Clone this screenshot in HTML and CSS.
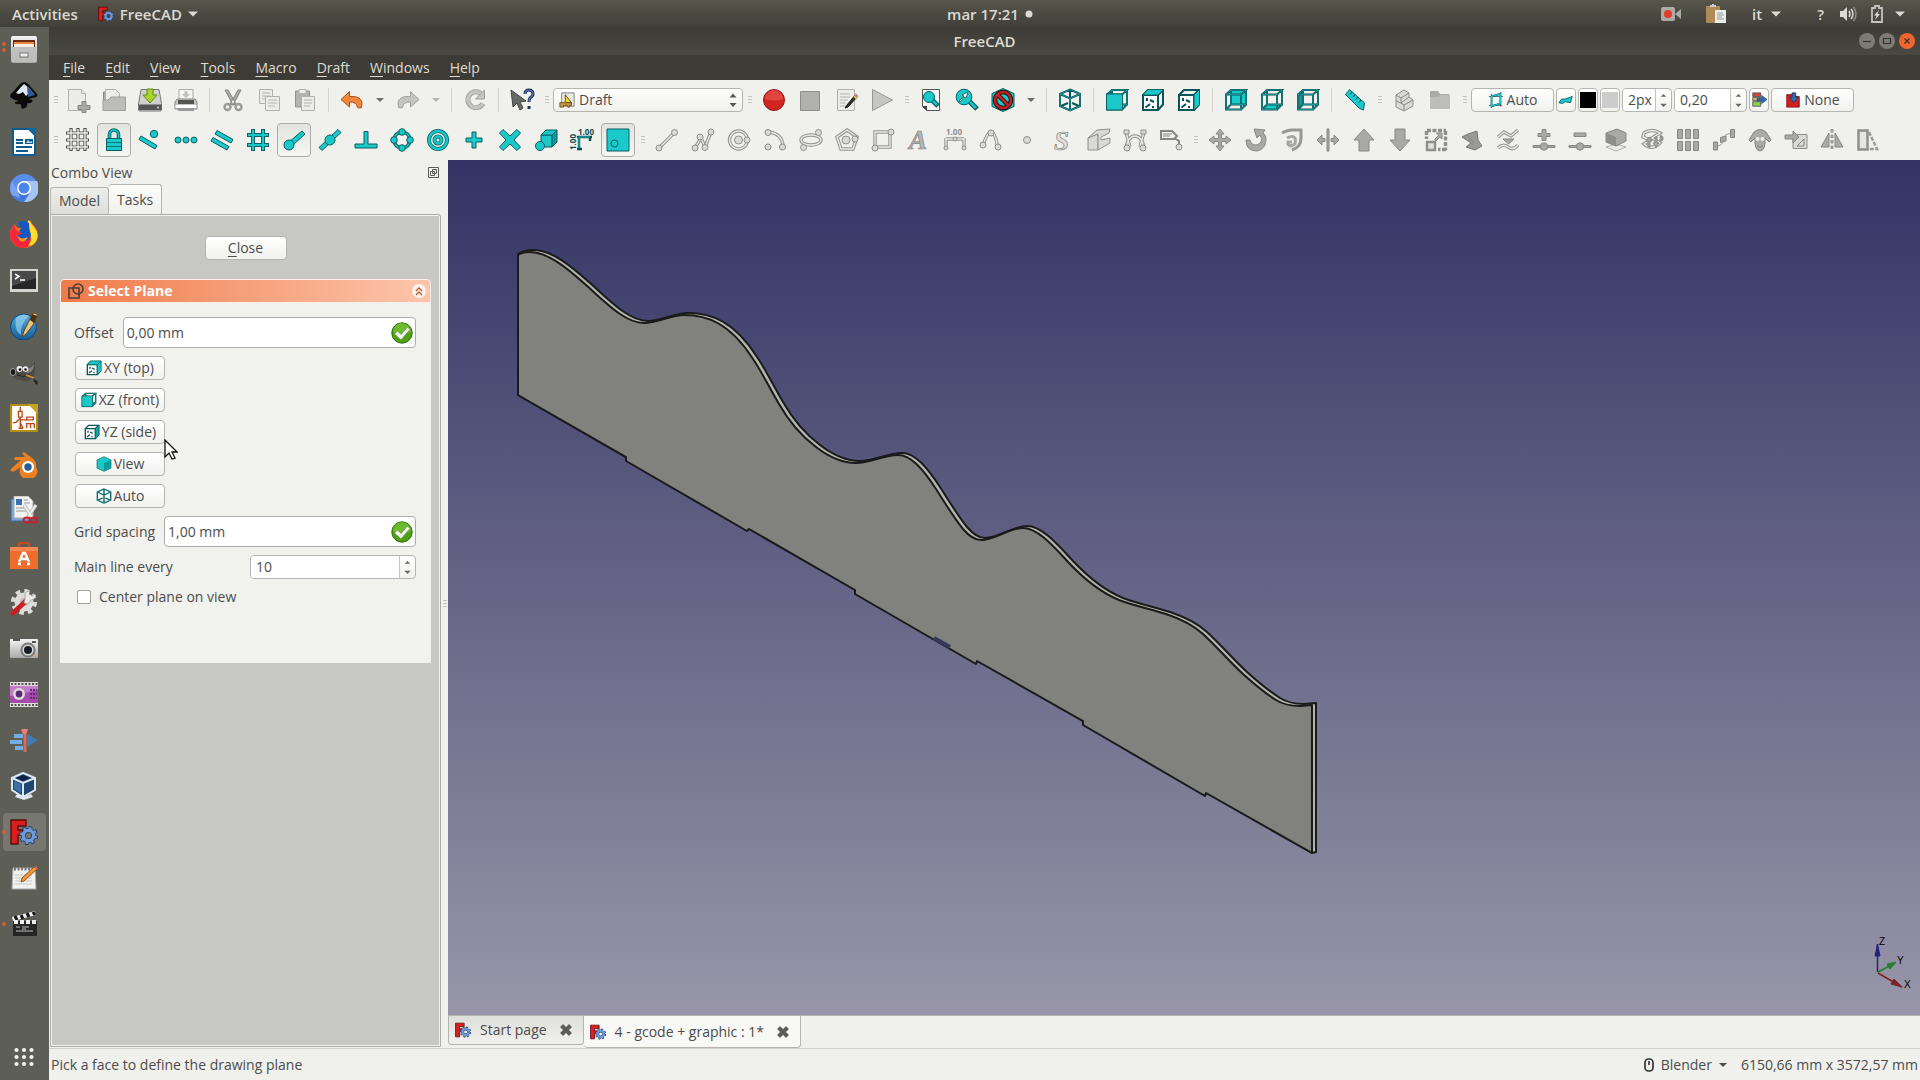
FILE: index.html
```html
<!DOCTYPE html>
<html lang="en">
<head>
  <meta charset="UTF-8">
  <meta name="viewport" content="width=device-width, initial-scale=1">
  <title>FreeCAD</title>
  <link rel="stylesheet" href="styles.css">
</head>
<body>
  <!-- Shared symbols -->
  <svg class="sprite" aria-hidden="true">
    <defs>
      <linearGradient id="steel" x1="0" y1="0" x2="0" y2="1">
        <stop offset="0" stop-color="#f4f4f4"/><stop offset="1" stop-color="#a9a9a9"/>
      </linearGradient>
      <linearGradient id="blueBall" x1="0" y1="0" x2="0" y2="1">
        <stop offset="0" stop-color="#4fb0e0"/><stop offset="1" stop-color="#155c9c"/>
      </linearGradient>
    </defs>
    <symbol id="freecad" viewBox="0 0 28 26">
      <path d="M1 1h15v6H8v4h5v5H8v9H1z" fill="#d8201f" stroke="#5c0a0a" stroke-width="1.4"/>
      <circle cx="18.5" cy="16.5" r="7.8" fill="none" stroke="#1f3a66" stroke-width="3.6" stroke-dasharray="3.3 2.83"/>
      <circle cx="18.5" cy="16.5" r="5.2" fill="none" stroke="#1f3a66" stroke-width="5"/>
      <circle cx="18.5" cy="16.5" r="7.4" fill="none" stroke="#6c9bd8" stroke-width="2.4" stroke-dasharray="2.4 3.41" stroke-dashoffset="-.4"/>
      <circle cx="18.5" cy="16.5" r="5.2" fill="none" stroke="#6c9bd8" stroke-width="3.4"/>
    </symbol>
    <symbol id="wire" viewBox="0 0 24 24">
      <path class="dark" d="M2 6.500h15v15H2zM2 6.500 7 2h15l-5 4.500M22 2v14.500l-5 5M7 2v14.500h15M7 16.500l-5 5"/>
      <path class="core" d="M2 6.500h15v15H2zM2 6.500 7 2h15l-5 4.500M22 2v14.500l-5 5M7 2v14.500h15M7 16.500l-5 5"/>
    </symbol>
    <symbol id="iso" viewBox="0 0 24 24">
      <path class="dark" d="M12 1.500 22 6v12l-10 4.500L2 18V6zM2 6l10 4.500L22 6M12 10.500v12M12 2v8M3 18l7-3M21 18l-7-3"/>
      <path class="core" d="M12 1.500 22 6v12l-10 4.500L2 18V6zM2 6l10 4.500L22 6M12 10.500v12"/>
    </symbol>
    <symbol id="box" viewBox="0 0 24 24">
      <path d="M2 7h15v15H2z" fill="#fff"/>
      <path class="dark" d="M2 7h15v15H2zM2 7l5-5h15v14.500l-5 5.500M17 7l5-5"/>
      <path class="dark" d="M6 10v3M4.500 19.500 9 16M9 12l4 2M12 18v2"/>
    </symbol>
    <symbol id="check" viewBox="0 0 22 22">
      <circle cx="11" cy="11" r="10.2" fill="#4ba30f" stroke="#2f6c0a"/>
      <path d="M2 10a9 9 0 0 1 18 0q-9 4-18 0z" fill="#79c637" opacity=".7"/>
      <path d="m3.500 12 3-3 3.500 3.500L16.500 5l2.500 2.500L10 18z" fill="#f4f4f0" stroke="#6d8a5d" stroke-width=".7"/>
    </symbol>
    <symbol id="cross" viewBox="0 0 12 12">
      <path d="M3 .500 6 3.500l3-3L11.500 3l-3 3 3 3L9 11.500l-3-3-3 3L.500 9l3-3-3-3z" fill="#5b5c57" stroke="#44453f" stroke-width=".6"/>
    </symbol>
    <symbol id="spin" viewBox="0 0 16 24">
      <path d="M5 8.500 8 5.500l3 3zM4.500 16h7L8 19.500z" fill="#666"/>
    </symbol>
    <symbol id="down" viewBox="0 0 10 6"><path d="M0 .500h10L5 5.500z"/></symbol>
  </svg>

  <!-- System bar -->
  <header class="topbar">
    <div class="topbar-left">
      <button class="top-item">Activities</button>
      <button class="top-item app-name"><svg width="16" height="16"><use href="#freecad"/></svg>FreeCAD<svg class="caret" width="10" height="6"><use href="#down"/></svg></button>
    </div>
    <button class="top-item clock">mar 17:21 <svg width="8" height="8" viewBox="0 0 8 8"><circle cx="4" cy="4" r="3.5" fill="#dcdad4"/></svg></button>
    <div class="topbar-right">
      <svg class="tray-rec" width="20" height="16" viewBox="0 0 20 16"><rect y="1" width="14" height="14" rx="2" fill="#aaa9a4"/><path d="m14 8 6-5v10z" fill="#aaa9a4"/><circle cx="7" cy="8" r="4" fill="#e23c28"/></svg>
      <svg class="tray-clip" width="20" height="20" viewBox="0 0 20 20"><rect y="2" width="14" height="17" rx="1" fill="#b08a58"/><path d="M4 3h6V1H8V0H6v1H4z" fill="#ccc"/><path d="M9 6h11v13H9z" fill="#ececea"/><path d="M11 9h6M11 11h7M11 13h5M11 15h7" stroke="#999"/></svg>
      <button class="top-item lang">it<svg class="caret" width="10" height="6"><use href="#down"/></svg></button>
      <span class="tray-help">?</span>
      <svg width="17" height="16" viewBox="0 0 17 16"><path d="M0 5h3l4-4v14l-4-4H0z" fill="#dcdad4"/><path d="M9 5q2 3 0 6M11 3q4 5 0 10" fill="none" stroke="#dcdad4" stroke-width="1.5"/><path d="M13.500 1q5 7 0 14" fill="none" stroke="#8d8b84" stroke-width="1.5"/></svg>
      <svg class="tray-battery" width="12" height="18" viewBox="0 0 12 18"><path d="M1 3h3V1h4v2h3v14H1z" fill="none" stroke="#c5c3bc" stroke-width="1.8"/><path d="M8 5 3 10.500h2.500L4 15l5-6H6.500z" fill="#dcdad4"/></svg>
      <svg class="caret" width="10" height="6"><use href="#down"/></svg>
    </div>
  </header>

  <div class="desktop">
    <!-- Launcher -->
    <nav class="dock" aria-label="Launcher">
      <button class="dock-item running two" aria-label="Files"><svg viewBox="0 0 28 28"><rect x="1" y="0" width="26" height="27" rx="2" fill="url(#steel)"/><path d="M3 4h22v7H3z" fill="#6b2b12"/><path d="M4 6h20v5H4z" fill="#ee8240"/><path d="M4 8h20v3H4z" fill="#f6eee4"/><path d="M2 11h24v15H2z" fill="#bebebc"/><rect x="10" y="17" width="8" height="4" fill="#eee" stroke="#777"/></svg></button>
      <button class="dock-item" aria-label="Inkscape"><svg viewBox="0 0 28 28"><path d="M14 0q3 0 6 4l7 8q2 3-5 4l-3 1q5 1 3 3t-5 1q1 3-2 5t-4-1q1-2-1-3-6 1-5-2l4-1Q0 17 0 14q0-2 3-4l6-7q3-3 5-3z" fill="#0b0b0c"/><path d="m14 2 5 4 5 6-5-1-3 3-3-4-4 2-3-1 5-6z" fill="#dfe8f2"/><path d="m17 4 8 9-7 2z" fill="#2e5b98"/></svg></button>
      <button class="dock-item" aria-label="Writer"><svg viewBox="0 0 28 28"><path d="M3 1h16l6 6v20H3z" fill="#fff" stroke="#0f5c91" stroke-width="2"/><path d="M18 0h8v8z" fill="#0b6aa8"/><path d="M6 12h7M6 15h7M6 19h16M6 23h12" stroke="#0f5c91" stroke-width="2"/><path d="M15 11h8v5h-8z" fill="#0f5c91"/><path d="m16 15 2-3 2 2 2-1v2z" fill="#b7d8ec"/></svg></button>
      <button class="dock-item" aria-label="Chromium"><svg viewBox="0 0 28 28"><circle cx="14" cy="14" r="14" fill="#5b8def"/><path d="M14 7H27A14 14 0 0 1 14 28l6-11z" fill="#a4c4f8"/><path d="M8 17 2 7a14 14 0 0 0 12 21l5-8z" fill="#4674d9"/><path d="M8 17 2 7a14 14 0 0 0 0 14l8 3z" fill="#7aa4f2"/><circle cx="14" cy="14" r="7" fill="#fff"/><circle cx="14" cy="14" r="5.5" fill="#4a86ea"/></svg></button>
      <button class="dock-item" aria-label="Firefox"><svg viewBox="0 0 28 28"><path d="M20 0q2 4 5 7 3 4 3 8a14 13 0 0 1-28 0Q0 8 5 4q0 3 4 4 5 0 8 3z" fill="#ff6b1e"/><path d="M0 14q1-7 5-9-1 6 5 7l5 8 8-2q-1 9-10 10A14 14 0 0 1 0 14z" fill="#f5263c"/><path d="M19 0q2 4 5 7 5 6 3 12t-9 7q6-8 1-15t0-11z" fill="#ffdf2b"/><path d="M8 3q5-4 11 0 0 7 2 11 0 7-7 7t-6-6l4-1q-5-4 0-6-3 0-4-5z" fill="#1558c4"/><path d="M6 14q5 7 12 3-3 6-8 4z" fill="#ff9a1c"/></svg></button>
      <button class="dock-item" aria-label="Terminal"><svg viewBox="0 0 28 28"><path d="M0 3h28v23H0z" fill="#d5d5d1"/><path d="M2 5h24v18H2z" fill="#262626"/><path d="M2 5h24v7L2 20z" fill="#484848"/><path d="m5 8 4 2.500L5 13M10 14h5" stroke="#fff" stroke-width="1.5" fill="none"/></svg></button>
      <button class="dock-item" aria-label="Scribus"><svg viewBox="0 0 28 28"><circle cx="13.5" cy="15" r="13" fill="url(#blueBall)" stroke="#0e4472"/><path d="M6 6q8-6 13-2-9 8-8 19-7-4-5-17z" fill="#9fd4ee" opacity=".65"/><path d="M23 1q5 0 4 3l-4 9-7 9-4 3 2-6z" fill="#e8c47c" stroke="#6b4616"/><path d="m22 2 5 2-3 7-4-3z" fill="#4a3013"/></svg></button>
      <button class="dock-item" aria-label="GIMP"><svg viewBox="0 0 28 28"><path d="M25 3q1 12-2 17-6 5-13 2-5 0-8-5-2-4 2-7l7 2q10-1 14-9z" fill="#4d4b45"/><path d="M24 6q0 7-6 9l-5-3q8-1 11-6z" fill="#85827a"/><ellipse cx="3" cy="14" rx="2.800" ry="3.500" fill="#191919" stroke="#bbb" stroke-width=".8"/><circle cx="9.5" cy="11" r="3" fill="#eee"/><circle cx="15.5" cy="11" r="2.800" fill="#eee"/><circle cx="10" cy="11.500" r="1.3"/><circle cx="15.5" cy="11.500" r="1.2"/><path d="M7 17q6 3 12 0" fill="none" stroke="#222"/><path d="m16 17 8 3" stroke="#dc8a3a" stroke-width="1.8"/><path d="m23 20 5 4-1 3q-3-2-4-7z" fill="#222"/></svg></button>
      <button class="dock-item" aria-label="Schematics"><svg viewBox="0 0 30 30"><path d="M1 1h28v28H1z" fill="#fffdf6" stroke="#b48d18" stroke-width="2.4"/><path d="M19 0h11v11z" fill="#c8a41e"/><path d="M11 3v5M9 8h4v6H9zM11 14v3h7M18 14h7v3h-7zM6 20l5-5v11M3 20h3M11 20l3 6M9 26h5M17 21h9M18 21v5M22 21v5M26 21v5" fill="none" stroke="#b3471f" stroke-width="1.4"/></svg></button>
      <button class="dock-item" aria-label="Blender"><svg viewBox="0 0 28 28"><path d="M2 18q-2 2-1 3l2 1 8-5a9 8 0 1 0 15 0q1-5-4-9l-8-6-2 1 3 4H5l-1 3h7z" fill="#ef8021"/><circle cx="18" cy="17" r="6" fill="#fff"/><circle cx="18" cy="17" r="3.7" fill="#285b94"/></svg></button>
      <button class="dock-item" aria-label="Document scanner"><svg viewBox="0 0 28 28"><path d="M1 3h18v22H1z" fill="#7ba6d6" stroke="#3b6aa8"/><path d="M4 0h14l5 5v17H4z" fill="#f1f2f1" stroke="#aaa"/><path d="M6 3h6v6H6z" fill="#3a71b5"/><path d="M14 4h4M14 7h6M6 12h12M6 15h10" stroke="#999"/><path d="m14 9 8 12M26 9l-8 12" stroke="#b4b4b2" stroke-width="3.6"/><path d="m14 9 8 12M26 9l-8 12" stroke="#ecece9" stroke-width="2.2"/><ellipse cx="17" cy="24" rx="3.5" ry="2.6" fill="none" stroke="#cc2028" stroke-width="2"/><ellipse cx="24" cy="24" rx="3.5" ry="2.6" fill="none" stroke="#cc2028" stroke-width="2"/></svg></button>
      <button class="dock-item" aria-label="Software"><svg viewBox="0 0 28 28"><path d="M9 6V2q5-3 10 0v4" fill="none" stroke="#cc4a1c" stroke-width="2.4"/><path d="M0 5h28v22H0z" fill="#ee6c2c"/><path d="M0 5h28v4H0z" fill="#f58a50"/><path d="m9 20 4-9h2l4 9M8 22h3M17 22h3M10 17h8" fill="none" stroke="#fff" stroke-width="2.4"/></svg></button>
      <button class="dock-item" aria-label="Settings"><svg viewBox="0 0 28 28"><circle cx="14" cy="14" r="11" fill="none" stroke="#dcdcda" stroke-width="4" stroke-dasharray="4.5 4.14"/><circle cx="14" cy="14" r="9.5" fill="#dcdcda"/><circle cx="14" cy="14" r="4" fill="#b9b9b6"/><path d="m3 25 13-12" stroke="#c71f24" stroke-width="5" stroke-linecap="round"/><path d="m15 11-1 4 4 1 3-4q4 0 5-4l-1-2-3 2-3-2 1-3q-5 0-5 4z" fill="#e9e9e7" stroke="#999" stroke-width=".8"/></svg></button>
      <button class="dock-item" aria-label="Camera"><svg viewBox="0 0 28 28"><rect y="5" width="28" height="19" rx="1" fill="url(#steel)"/><path d="M3 4h7v3H3zM22 7h4v2h-4z" fill="#555"/><circle cx="18" cy="16" r="7.6" fill="#7b7b79"/><circle cx="18" cy="16" r="5.5" fill="#dcdcda"/><circle cx="18" cy="16" r="4" fill="#171c26"/><path d="m24 21 3 1-2 1z" fill="#ee9a3b"/></svg></button>
      <button class="dock-item" aria-label="Cheese"><svg viewBox="0 0 28 28"><path d="M0 2h28v25H0z" fill="#dededc"/><path d="M1 4h27M1 25h27" stroke="#555" stroke-width="2" stroke-dasharray="2 1.5"/><path d="M0 6h28v17H0z" fill="#a64bad"/><path d="M0 6h28v4L0 16z" fill="#c57acb"/><circle cx="9" cy="14" r="6" fill="#dcdcda"/><circle cx="9" cy="14" r="3.4" fill="#5b2a77"/><path d="M20 10h7M20 14h7M20 18h7" stroke="#642a72" stroke-width="2" stroke-dasharray="2 1"/></svg></button>
      <button class="dock-item" aria-label="Video editor"><svg viewBox="0 0 28 28"><path d="M4 8h9v4H4zM0 14h12v4H0zM5 20h8v4H5z" fill="#72aee6"/><path d="M17 8v13l11-7z" fill="#4379b5"/><path d="M15 5v21" stroke="#da6a5c" stroke-width="3"/><path d="M11 3h7l-2 5h-3z" fill="#ed8374"/></svg></button>
      <button class="dock-item" aria-label="VirtualBox"><svg viewBox="0 0 28 28"><path d="m7 22 7 3 7-3 2 3-9 3-9-3z" fill="#dbe6f1"/><path d="M13 1 25 6v12l-12 7L2 18V6z" fill="#20466f" stroke="#dce9f4" stroke-width="2"/><path d="m2 6 11 5 12-5M13 11v14" fill="none" stroke="#dce9f4" stroke-width="2"/><path d="m6 6 7-3 7 3-7 3z" fill="#0c2445"/><path d="m4 9 7 3v9l-7-4z" fill="#3e70a4"/></svg></button>
      <button class="dock-item running active" aria-label="FreeCAD"><svg><use href="#freecad"/></svg></button>
      <button class="dock-item" aria-label="Notes"><svg viewBox="0 0 28 28"><path d="M3 4h22l1 21H2z" fill="#f1f1ed" stroke="#aaa"/><path d="M4 5h20" stroke="#777" stroke-width="3" stroke-dasharray="2 1.5"/><path d="M5 11h17M5 14h17M5 17h17M5 20h17" stroke="#c6c6c2"/><path d="m27 5-13 12-3 1 1-4L24 3z" fill="#f19838" stroke="#96561b"/><path d="m24 3 3 3 1-1-2-3z" fill="#d65"/></svg></button>
      <button class="dock-item running" aria-label="Video player"><svg viewBox="0 0 28 28"><path d="m2 7 23-6 1 4-23 6z" fill="#eee"/><path d="m5 6 2 4M11 5l2 4M17 3l2 4M23 2l2 3" stroke="#171717" stroke-width="3"/><path d="M3 11h24v15H3z" fill="#262626"/><path d="M4 12h22" stroke="#eee" stroke-width="4" stroke-dasharray="4 2"/><path d="M6 17h4M12 17h7M6 21h17M12 19h4" stroke="#bbb"/></svg></button>
      <button class="dock-item apps" aria-label="Show applications"><svg viewBox="0 0 28 28"><path d="M6.500 7h.010M14 7h.010M21.500 7h.010M6.500 14h.010M14 14h.010M21.500 14h.010M6.500 21h.010M14 21h.010M21.500 21h.010" stroke="#f2f1ee" stroke-width="4.2" stroke-linecap="round"/></svg></button>
    </nav>

    <main class="window">
      <div class="titlebar">
        <h1>FreeCAD</h1>
        <div class="window-buttons">
          <button aria-label="Minimize"><svg viewBox="0 0 16 16"><path d="M4 8.500h8"/></svg></button>
          <button aria-label="Restore"><svg viewBox="0 0 16 16"><path d="M4.500 5.500h7v5h-7z"/></svg></button>
          <button class="close" aria-label="Close window"><svg viewBox="0 0 16 16"><path d="m5.500 5.500 5 5m0-5-5 5"/></svg></button>
        </div>
      </div>
      <div class="menubar">
        <button><u>F</u>ile</button>
        <button><u>E</u>dit</button>
        <button><u>V</u>iew</button>
        <button><u>T</u>ools</button>
        <button><u>M</u>acro</button>
        <button><u>D</u>raft</button>
        <button><u>W</u>indows</button>
        <button><u>H</u>elp</button>
      </div>

      <!-- Toolbar: file, view, macro, properties -->
      <div class="toolbar">
        <span class="grip"></span>
        <button class="tool" aria-label="New"><svg viewBox="0 0 24 24"><path class="paper" d="M2.500 1.500h13l4 4v17h-17z"/><path class="paper" d="M15.500 1.500v4h4"/><path class="g" d="M16 13.500h4v4h4v4h-4v3h-4v-3h-4v-4h4z"/></svg></button>
        <button class="tool" aria-label="Open"><svg viewBox="0 0 24 24"><path class="g" d="M1.500 4h7v18h-7z"/><path class="paper" d="M3.500 1.500h10l4 4V15h-14z"/><path d="M1 22.500V12h5l3-3h14.500v13.500z" fill="#bcbcba" stroke="#9e9e9c"/></svg></button>
        <button class="tool" aria-label="Save"><svg viewBox="0 0 24 24"><path d="M3 1.500h18l2.500 14V22q0 1-1 1h-21q-1 0-1-1v-6z" fill="#cfcfcd" stroke="#777"/><path d="M1 16.500h22.500V22H1z" fill="#555"/><circle cx="20" cy="19.5" r="1" fill="#ddd"/><path d="M9 1h6v6h4l-7 8-7-8h4z" fill="#a6d52c" stroke="#5b8c0c"/></svg></button>
        <button class="tool" aria-label="Print"><svg viewBox="0 0 24 24"><path d="M5 1.500h14V12H5z" fill="#f5f5f3" stroke="#aaa"/><path d="M10.500 3h3v3h3L12 10 7.500 6h3z" fill="#c2c2c0"/><path d="M3 11h18l2 3v7H1v-7z" fill="#c4c4c2" stroke="#888"/><path d="M4 12h16v4H4z" fill="#555"/><path d="M1.500 17h21v3h-21z" fill="#fff"/><path d="M4 20h16v3H4z" fill="#999"/></svg></button>
        <span class="sep"></span>
        <button class="tool" aria-label="Cut"><svg viewBox="0 0 24 24"><path class="g" d="m4 2 3 0 8 14-3 1zM20 2l-3 0-8 14 3 1z"/><ellipse cx="6.500" cy="19" rx="3" ry="3" fill="none" stroke="#9c9c9a" stroke-width="2.4"/><ellipse cx="17.5" cy="19" rx="3" ry="3" fill="none" stroke="#9c9c9a" stroke-width="2.4"/></svg></button>
        <button class="tool" aria-label="Copy"><svg viewBox="0 0 24 24"><path class="paper" d="M2.500 1.500h13v14h-13z"/><path class="lines" d="M5 5h8M5 8h8M5 11h8"/><path class="paper" d="M8.500 8.500h14v14h-14z"/><path class="lines" d="M11 12h9M11 15h9M11 18h7"/></svg></button>
        <button class="tool" aria-label="Paste"><svg viewBox="0 0 24 24"><path d="M2.500 3h14v16h-14z" fill="#b3b3b0" stroke="#929290"/><path class="paper" d="M6 1.500h7v4H6z"/><path class="paper" d="M8.500 8.500h13v14h-13z"/><path class="lines" d="M11 12h8M11 15h8M11 18h6"/></svg></button>
        <span class="sep"></span>
        <button class="tool" aria-label="Undo"><svg viewBox="0 0 24 24"><path d="M9.500 3.500v5q11-1 12.500 6l-.500 5q-2 1-4 0-1-6-8-5.500v5L1 11.500z" fill="#f0883b" stroke="#b14f12"/></svg></button>
        <button class="drop" aria-label="Undo history"><svg width="8" height="6"><use href="#down"/></svg></button>
        <button class="tool" aria-label="Redo"><svg viewBox="0 0 24 24"><path d="M14.500 3.500v5q-11-1-12.500 6l.500 5q2 1 4 0 1-6 8-5.500v5l8.500-7.500z" fill="#c4c4c2" stroke="#a0a09e"/></svg></button>
        <button class="drop off" aria-label="Redo history"><svg width="8" height="6"><use href="#down"/></svg></button>
        <span class="sep"></span>
        <button class="tool" aria-label="Refresh"><svg viewBox="0 0 24 24"><path d="M18 5.500a8 8 0 1 0 2 10" fill="none" stroke="#a0a09e" stroke-width="5"/><path d="M18 5.500a8 8 0 1 0 2 10" fill="none" stroke="#c4c4c2" stroke-width="3.4"/><path d="M21.500 2v9h-9z" fill="#c4c4c2" stroke="#a0a09e"/></svg></button>
        <span class="sep"></span>
        <button class="tool" aria-label="What's this?"><svg viewBox="0 0 24 24"><path d="m1 2 2 17 4-4 3 7 3-2-3-6 6-1z" fill="#666a68" stroke="#444"/><path d="M15 6q0-4 4-4t4 4q0 2-3 4-1 1-1 4M19 18v3" fill="none" stroke="#1e2d50" stroke-width="3"/><path d="M15 6q0-4 4-4t4 4q0 2-3 4-1 1-1 4" fill="none" stroke="#5b7cb4" stroke-width="1.2"/></svg></button>
        <span class="grip"></span>
        <div class="combo">
          <svg viewBox="0 0 18 18"><path d="M3 1h14v15H3z" fill="#e8e8e6" stroke="#777"/><path d="m7 3 7 9H7z" fill="#f5d51b" stroke="#55480d"/><path d="M1 12h13v3h-2v2h-2v-2H5v2H1z" fill="#c99a4d" stroke="#6c4813"/></svg>
          <select aria-label="Workbench"><option>Draft</option></select>
          <svg viewBox="0 0 16 18"><path d="m4.500 6.500 3.500-4 3.500 4zM4.500 12h7L8 16z" fill="#555"/></svg>
        </div>
        <span class="grip"></span>
        <button class="tool" aria-label="Record macro"><svg viewBox="0 0 24 24"><circle cx="12" cy="12" r="10.5" fill="#d32424" stroke="#971313"/><path d="M3 11a9 9 0 0 1 18 0q-9 3-18 0z" fill="#e2443f"/></svg></button>
        <button class="tool" aria-label="Stop macro"><svg viewBox="0 0 24 24"><path d="M2.500 3.500h19v19h-19z" fill="#b0b0ae" stroke="#8d8d8b"/></svg></button>
        <button class="tool" aria-label="Macros"><svg viewBox="0 0 24 24"><path class="paper" d="M3.500 1.500h17v21h-17z"/><path class="lines" d="M6 6h10M6 9h10M6 12h8M6 15h6M6 18h6"/><path d="m22 6-9 11-2 3 3-1 10-11z" fill="#333" stroke="#111"/><path d="m20 8 3 3" stroke="#e0c04b" stroke-width="2"/><path d="m21 6 3 3" stroke="#d68bb7" stroke-width="2"/></svg></button>
        <button class="tool" aria-label="Run macro"><svg viewBox="0 0 24 24"><path d="m2.500 1.500 20 10.500-20 10.500z" fill="#c6c6c4" stroke="#989896"/></svg></button>
        <span class="grip"></span>
        <button class="tool" aria-label="Fit all"><svg viewBox="0 0 24 24"><path d="M3.500 1.500h17v21H8l-4.500-4z" fill="#f6f6f6" stroke="#555"/><path d="m13 12 6 6" stroke="#095a5c" stroke-width="5"/><path d="m13 12 5 5" stroke="#17c6c6" stroke-width="2.5"/><circle class="t" cx="10" cy="9" r="5.5"/><path d="M3 18h5v5z" fill="#444"/></svg></button>
        <button class="tool" aria-label="Fit selection"><svg viewBox="0 0 24 24"><path d="m14 13 8 8" stroke="#095a5c" stroke-width="5"/><path d="m14 13 7 7" stroke="#17c6c6" stroke-width="2.5"/><circle class="t" cx="9" cy="9" r="7.8"/><path d="m4 13 5-5-2-1 6-3-2 6-2-1-4 5z" fill="#fff" stroke="#333" stroke-width=".7"/></svg></button>
        <button class="tool" aria-label="Draw style"><svg viewBox="0 0 24 24"><path class="t" d="m12 .500 11 5v13l-11 5-11-5v-13z"/><circle cx="12" cy="12" r="8" fill="none" stroke="#2b0808" stroke-width="4.5"/><path d="m6.500 6.500 11 11" stroke="#2b0808" stroke-width="4.5"/><circle cx="12" cy="12" r="8" fill="none" stroke="#be2323" stroke-width="2.5"/><path d="m6.500 6.500 11 11" stroke="#be2323" stroke-width="2.5"/></svg></button>
        <button class="drop" aria-label="Draw style list"><svg width="8" height="6"><use href="#down"/></svg></button>
        <span class="sep"></span>
        <button class="tool" aria-label="Axonometric"><svg><use href="#iso"/></svg></button>
        <span class="sep"></span>
        <button class="tool" aria-label="Front"><svg viewBox="0 0 24 24"><use href="#wire"/><path class="t" d="M1.500 6h16v16h-16z"/></svg></button>
        <button class="tool" aria-label="Top"><svg viewBox="0 0 24 24"><use href="#box"/><path class="t" d="M1.500 7 7 1.500h15.500L17 7z"/></svg></button>
        <button class="tool" aria-label="Right"><svg viewBox="0 0 24 24"><use href="#box"/><path class="t" d="m17 7 5.500-5.500v15L17 22z"/></svg></button>
        <span class="sep"></span>
        <button class="tool" aria-label="Rear"><svg viewBox="0 0 24 24"><path class="t" d="M7 2h15v14.500H7z"/><use href="#wire"/></svg></button>
        <button class="tool" aria-label="Bottom"><svg viewBox="0 0 24 24"><path class="t" d="M7 16.500h15l-5 5H2z"/><use href="#wire"/></svg></button>
        <button class="tool" aria-label="Left"><svg viewBox="0 0 24 24"><path d="m2 6.500 5-4.500v14.500l-5 5z" fill="#0d9698"/><use href="#wire"/></svg></button>
        <span class="sep"></span>
        <button class="tool" aria-label="Measure"><svg viewBox="0 0 24 24"><path class="t" d="m6.500 1.500 15 13.500-1 7-4-1.500L2.500 6.500z"/><path d="m9 4-2 2.500M12 6.500l-2 2.500M15 9l-2 2.500M18 12l-2 2.500" stroke="#073f40"/></svg></button>
        <span class="grip"></span>
        <button class="tool" aria-label="Part"><svg viewBox="0 0 24 24"><path class="w" d="m4 7 8-5 5 3v4l4 3v6l-9 5-8-4z"/><path class="gs" d="m4 7 5 3 8-5M9 10v5l8-6M9 15l3 2 9-5M12 17v6M4 13l5 2"/></svg></button>
        <button class="tool" aria-label="Group"><svg viewBox="0 0 24 24"><path d="M2 3h8l2 3h9v15H2z" fill="#aaaaa8"/><path d="M2 9h9l1-2h10v14H2z" fill="#bdbdbb"/></svg></button>
        <span class="grip"></span>
        <div class="properties">
          <button class="push wide"><svg viewBox="0 0 18 18"><path d="M4 2v16M1 15h15M14 0v16M1 5h16" stroke="#456"/><path class="dark" d="m4 5 10-3v11L4 16z"/><path d="m4 5 10-3v11L4 16z" fill="none" stroke="#17c6c6" stroke-width="1.5"/></svg>Auto</button>
          <button class="push small" aria-label="Style"><svg viewBox="0 0 18 18"><path class="t" d="m1 12 3-4 4 0 8-3-2 7-6-1-3 2z"/></svg></button>
          <button class="push small" aria-label="Line color"><span class="swatch line-color"></span></button>
          <button class="push small" aria-label="Face color"><span class="swatch face-color"></span></button>
          <div class="spinbox line-width"><input type="text" value="2px" aria-label="Line width"><svg><use href="#spin"/></svg></div>
          <div class="spinbox text-size"><input type="text" value="0,20" aria-label="Text size"><svg><use href="#spin"/></svg></div>
          <button class="push small" aria-label="Apply style"><svg viewBox="0 0 18 18"><path d="M2 1h9v4H2z" fill="#d24545" stroke="#555"/><path d="M2 6h9v4H2z" fill="#c8b568" stroke="#555"/><path d="M2 11h9v5H2z" fill="#8bd34d" stroke="#555"/><path d="M7 7h5V4l6 4.500-6 4.500v-3H7z" fill="#3567a8" stroke="#1b3d70" stroke-width=".7"/></svg></button>
          <button class="push wide"><svg viewBox="0 0 18 18"><path d="M2 3h6l1 2h7v12H2z" fill="#d11f22" stroke="#831013"/><path d="M8 1h4v5h3l-5 6-5-6h3z" fill="#376bb0" stroke="#183664"/></svg>None</button>
        </div>
      </div>

      <!-- Toolbar: snapping, draft creation and modification -->
      <div class="toolbar">
        <span class="grip"></span>
        <button class="tool" aria-label="Grid"><svg viewBox="0 0 24 24"><path d="M0 5h23M0 12h23M0 19h23M5 0v23M12 0v23M19 0v23" stroke="#4c4c4c" stroke-width="3.2"/><path d="M1 5h21M1 12h21M1 19h21M5 1v21M12 1v21M19 1v21" stroke="#f1f1f1" stroke-width="1.4"/></svg></button>
        <button class="tool on" aria-label="Snap lock"><svg viewBox="0 0 24 24"><path d="M7.500 11V6.500a4.500 4.500 0 0 1 9 0V11" fill="none" stroke="#0a6467" stroke-width="3.6"/><path d="M7.500 11V6.500a4.500 4.500 0 0 1 9 0V11" fill="none" stroke="#17bcbc" stroke-width="1.8"/><path class="t" d="M4.500 10.500h15v12h-15z"/><path d="M5 14.500h14M5 18.500h14" stroke="#0a7b7d"/></svg></button>
        <button class="tool" aria-label="Snap near"><svg viewBox="0 0 24 24"><path class="t" d="m3 8 16 9.500-2 3.500L1 11.500z"/><circle class="t" cx="16" cy="6" r="3.7"/></svg></button>
        <button class="tool" aria-label="Snap extension"><svg viewBox="0 0 24 24"><circle class="t" cx="4" cy="12" r="3"/><circle class="t" cx="12" cy="12" r="3"/><circle class="t" cx="20" cy="12" r="3"/></svg></button>
        <button class="tool" aria-label="Snap parallel"><svg viewBox="0 0 24 24"><path class="t" d="m7 2.500 16 9-2 3.500-16-9zM3 9.500l16 9-2 3.500-16-9z"/></svg></button>
        <button class="tool" aria-label="Snap grid"><svg viewBox="0 0 24 24"><path d="M7 1v22M17 1v22M1 7h22M1 17h22" stroke="#0a6467" stroke-width="4"/><path d="M7 2v20M17 2v20M2 7h20M2 17h20" stroke="#17c6c6" stroke-width="2"/></svg></button>
        <button class="tool on" aria-label="Snap endpoint"><svg viewBox="0 0 24 24"><path class="t" d="m20 3 3 3-12 11-4-3z"/><circle class="t" cx="7" cy="17" r="5"/></svg></button>
        <button class="tool" aria-label="Snap midpoint"><svg viewBox="0 0 24 24"><path class="t" d="m20 1.500 3 3-19 18-3-3z"/><circle class="t" cx="12" cy="12" r="5"/><path d="m9 15 6-6" stroke="#17c6c6" stroke-width="4"/></svg></button>
        <button class="tool" aria-label="Snap perpendicular"><svg viewBox="0 0 24 24"><path class="t" d="M10 3.500h4V16h9v4H1v-4h9z"/></svg></button>
        <button class="tool" aria-label="Snap angle"><svg viewBox="0 0 24 24"><circle cx="12" cy="12" r="8" fill="none" stroke="#0a6467" stroke-width="3.5"/><circle cx="12" cy="12" r="8" fill="none" stroke="#17c6c6" stroke-width="1.5"/><circle class="t" cx="12" cy="4" r="3.3"/><circle class="t" cx="12" cy="20" r="3.3"/><circle class="t" cx="4" cy="12" r="3.3"/><circle class="t" cx="20" cy="12" r="3.3"/></svg></button>
        <button class="tool" aria-label="Snap center"><svg viewBox="0 0 24 24"><circle cx="12" cy="12" r="9" fill="none" stroke="#0a6467" stroke-width="4"/><circle cx="12" cy="12" r="9" fill="none" stroke="#17c6c6" stroke-width="2.5"/><circle cx="12" cy="12" r="3.5" fill="none" stroke="#0a6467" stroke-width="4"/><circle cx="12" cy="12" r="3.5" fill="none" stroke="#17c6c6" stroke-width="2.5"/></svg></button>
        <button class="tool" aria-label="Snap ortho"><svg viewBox="0 0 24 24"><path class="t" d="M10 4h4v6h6v4h-6v6h-4v-6H4v-4h6z"/></svg></button>
        <button class="tool" aria-label="Snap intersection"><svg viewBox="0 0 24 24"><path class="t" d="M5 1.500 12 8l7-6.500L22.500 5 16 12l6.500 7-3.500 3.500-7-6.500-7 6.500L1.500 19 8 12 1.500 5z"/></svg></button>
        <button class="tool" aria-label="Snap special"><svg viewBox="0 0 24 24"><path class="t" d="M7 7h11v12H7z"/><path class="t" d="m7 7 5-5h11l-5 5z"/><path d="m18 7 5-5v12l-5 5z" fill="#0d9698" stroke="#0a5f62"/><circle class="t" cx="6" cy="18" r="4.5"/></svg></button>
        <button class="tool" aria-label="Snap dimensions"><svg viewBox="0 0 24 24"><path d="M9 22V9h13M7 21h5M7 9h4M20 8v5" fill="none" stroke="#0a4c4e" stroke-width="2.4"/><path d="M9 20V9h11" fill="none" stroke="#17c6c6"/><text class="dim" x="8" y="7">1.00</text><text class="dim" x="-22" y="6" transform="rotate(-90)">1.00</text></svg></button>
        <button class="tool on" aria-label="Snap working plane"><svg viewBox="0 0 24 24"><path class="t" d="M1 1h22v22H1z"/><circle class="t" cx="8.5" cy="15.5" r="3.5"/></svg></button>
        <span class="grip"></span>
        <button class="tool" aria-label="Line"><svg viewBox="0 0 24 24"><path class="pipe" d="M4 20 20 4"/><path class="pipe-in" d="M4 20 20 4"/><circle class="w" cx="4" cy="20" r="3"/><circle class="w" cx="19.5" cy="4.5" r="3"/></svg></button>
        <button class="tool" aria-label="Wire"><svg viewBox="0 0 24 24"><path class="pipe" d="m4 20 6-10 4 9 6-15"/><path class="pipe-in" d="m4 20 6-10 4 9 6-15"/><circle class="w" cx="4" cy="20" r="3"/><circle class="w" cx="9" cy="9" r="3"/><circle class="w" cx="14" cy="19.5" r="3"/><circle class="w" cx="20" cy="4" r="3"/></svg></button>
        <button class="tool" aria-label="Circle"><svg viewBox="0 0 24 24"><circle class="pipe" cx="11.5" cy="12" r="9"/><circle class="pipe-in" cx="11.5" cy="12" r="9"/><circle class="w" cx="11.5" cy="12" r="4"/><circle class="w" cx="20" cy="12" r="3"/></svg></button>
        <button class="tool" aria-label="Arc"><svg viewBox="0 0 24 24"><path class="pipe" d="M5 4q14 1 15 14"/><path class="pipe-in" d="M5 4q14 1 15 14"/><circle class="w" cx="5" cy="4.5" r="3"/><circle class="w" cx="5" cy="19" r="3"/><circle class="w" cx="19.5" cy="19" r="3"/></svg></button>
        <button class="tool" aria-label="Ellipse"><svg viewBox="0 0 24 24"><ellipse class="pipe" cx="12" cy="12" rx="10" ry="5"/><ellipse class="pipe-in" cx="12" cy="12" rx="10" ry="5"/><circle class="w" cx="4.5" cy="19.5" r="3"/><circle class="w" cx="19.5" cy="4.5" r="3"/></svg></button>
        <button class="tool" aria-label="Polygon"><svg viewBox="0 0 24 24"><path class="pipe" d="m12 2 10 7-4 12H6L2 9z"/><path class="pipe-in" d="m12 2 10 7-4 12H6L2 9z"/><circle class="w" cx="11" cy="12" r="4"/><circle class="w" cx="20" cy="11" r="3"/></svg></button>
        <button class="tool" aria-label="Rectangle"><svg viewBox="0 0 24 24"><path class="pipe" d="M4 4h15v15H4z"/><path class="pipe-in" d="M4 4h15v15H4z"/><circle class="w" cx="4" cy="20" r="3"/><circle class="w" cx="20" cy="4" r="3"/></svg></button>
        <button class="tool" aria-label="Text"><svg viewBox="0 0 24 24"><text class="letter" x="2" y="21">A</text></svg></button>
        <button class="tool" aria-label="Dimension"><svg viewBox="0 0 24 24"><path class="pipe" d="M3 11h18M3 10v10M21 10v10"/><path class="pipe-in" d="M3 11h18M3 10v10M21 10v10"/><circle class="w" cx="3" cy="20" r="2"/><circle class="w" cx="21" cy="20" r="2"/><circle class="w" cx="12" cy="11" r="2"/><text class="dim gray" x="3" y="7">1.00</text></svg></button>
        <button class="tool" aria-label="B-spline"><svg viewBox="0 0 24 24"><path class="pipe" d="M4 18Q8 4 12 4t7 16"/><path class="pipe-in" d="M4 18Q8 4 12 4t7 16"/><circle class="w" cx="4" cy="17" r="3"/><circle class="w" cx="12" cy="5" r="3"/><circle class="w" cx="19" cy="19" r="3"/></svg></button>
        <button class="tool" aria-label="Point"><svg viewBox="0 0 24 24"><circle class="w" cx="12" cy="12" r="3.5"/></svg></button>
        <button class="tool" aria-label="Shape string"><svg viewBox="0 0 24 24"><text class="letter script" x="3" y="22">S</text></svg></button>
        <button class="tool" aria-label="Facebinder"><svg viewBox="0 0 24 24"><path class="w" d="m1 10 10-5v17H1z"/><path class="w" d="m1 10 9-8 13-1-1 4-8 4v3l9-2v5l-12 7V6z"/></svg></button>
        <button class="tool" aria-label="Bezier curve"><svg viewBox="0 0 24 24"><path class="pipe" d="M3 20q2-12 9-12t9 12M3 4l4 15M21 4l-4 15"/><path class="pipe-in" d="M3 20q2-12 9-12t9 12M3 4l4 15M21 4l-4 15"/><path class="w" d="M1 2h5v4H1zM18 2h5v4h-5z"/><circle class="w" cx="4" cy="20" r="3"/><circle class="w" cx="20" cy="20" r="3"/></svg></button>
        <button class="tool" aria-label="Label"><svg viewBox="0 0 24 24"><path d="M2 3h11l5 5-3 3H2zM15 10l5 3v4" fill="none" stroke="#858583" stroke-width="2"/><path class="gs" d="M4 6h9M4 8h7"/><circle class="w" cx="20" cy="19" r="3"/></svg></button>
        <span class="grip"></span>
        <button class="tool" aria-label="Move"><svg viewBox="0 0 24 24"><path class="g" d="m12 1 4 5h-2.500v4.500H18V8l5 4-5 4v-2.500h-4.500V18H16l-4 5-4-5h2.500v-4.500H6V16l-5-4 5-4v2.500h4.500V6H8z"/></svg></button>
        <button class="tool" aria-label="Rotate"><svg viewBox="0 0 24 24"><path class="g" d="M2 12q0 11 11 11 9-2 9-12 0-4-3-6l2-3-11-1 3 9 3-3q3 4 1 7-3 4-7 3-4-2-4-5z"/></svg></button>
        <button class="tool" aria-label="Offset"><svg viewBox="0 0 24 24"><path d="M2 5q6-3 10-3h9v8q0 9-9 12" fill="none" stroke="#969694" stroke-width="3"/><path d="M7 10q6-3 8 0 2 7-4 8-4-1-3-4h4" fill="none" stroke="#a6a6a4" stroke-width="3"/></svg></button>
        <button class="tool" aria-label="Trim"><svg viewBox="0 0 24 24"><path class="g" d="m1 12 5-5v3.500h3v3H6V17zM23 12l-5-5v3.500h-3v3h3V17zM11 1h2v22h-2z"/></svg></button>
        <button class="tool" aria-label="Upgrade"><svg viewBox="0 0 24 24"><path class="g" d="m12 1 10 11h-5v11H7V12H2z"/></svg></button>
        <button class="tool" aria-label="Downgrade"><svg viewBox="0 0 24 24"><path class="g" d="M12 23 2 12h5V1h10v11h5z"/></svg></button>
        <button class="tool" aria-label="Scale"><svg viewBox="0 0 24 24"><path d="M3 2.500h19M21.500 3v19M22 21.500H14M2.500 3v8" fill="none" stroke="#8e8e8c" stroke-width="3.4" stroke-dasharray="4 1.5"/><path d="M3 14h8v8H3z" fill="#e1e1de" stroke="#8e8e8c" stroke-width="2.4"/><path class="g" d="M18 5v6l-2-2-4 4-1.500-1.500 4-4-2-2.500z"/></svg></button>
        <button class="tool" aria-label="Edit"><svg viewBox="0 0 24 24"><path d="m2 9 6-3 9-3 1 9 4 6-7 4-9-3 5-4z" fill="#9a9a98" stroke="#777"/><path class="gs" d="m3 8 10 9M6 6l8 9"/></svg></button>
        <button class="tool" aria-label="Wire to B-spline"><svg viewBox="0 0 24 24"><path class="pipe" d="m2 9 6-5 7 4 7-6M2 20q5-5 10-1t10-2"/><path class="pipe-in" d="m2 9 6-5 7 4 7-6M2 20q5-5 10-1t10-2"/><path class="g" d="M7 11h11l-5.500 5z"/></svg></button>
        <button class="tool" aria-label="Add point"><svg viewBox="0 0 24 24"><path class="g" d="M10 1.500h4v4h4v3h-4v4h-4v-4H6v-3h4zM1 17.500h22v2H1z"/><circle class="g" cx="12" cy="18.5" r="3.7"/></svg></button>
        <button class="tool" aria-label="Remove point"><svg viewBox="0 0 24 24"><path class="g" d="M6 5h12v3.500H6zM1 17.500h22v2H1z"/><circle class="g" cx="12" cy="18.5" r="3.7"/></svg></button>
        <button class="tool" aria-label="Shape 2D view"><svg viewBox="0 0 24 24"><path class="paper" d="m2 19 10-3 10 3-10 4z"/><path class="g" d="m2 5 11-4 9 4v8l-10 5-10-4z"/><path d="m2 5 10 4v9L2 14z" fill="#8e8e8c"/></svg></button>
        <button class="tool" aria-label="Draft to sketch"><svg viewBox="0 0 24 24"><path class="pipe" d="M4 5q8-5 16 0l-8 5 8 5q-8 8-16 1l6-4-7-3zM20 8q4 2 0 5"/><path class="pipe-in" d="M4 5q8-5 16 0l-8 5 8 5q-8 8-16 1l6-4-7-3z"/><path class="g" d="m9 9 3 4h-2v6H8v-6H6zM16 19l-3-4h2V9h2v6h2z"/></svg></button>
        <button class="tool" aria-label="Array"><svg viewBox="0 0 24 24"><path class="g" d="M1.500 1.500h5v9h-5zM9.500 1.500h5v9h-5zM17.500 1.500h5v9h-5zM1.500 13.500h5v9h-5zM9.500 13.500h5v9h-5zM17.500 13.500h5v9h-5z"/></svg></button>
        <button class="tool" aria-label="Path array"><svg viewBox="0 0 24 24"><path d="M4 18q7 0 7-6t9-7" fill="none" stroke="#9a9a98"/><path class="g" d="M1.500 14h4v8h-4zM8.500 9.500 14 8v5l-5.500 1.500zM18.500 1.500h4v8h-4z"/></svg></button>
        <button class="tool" aria-label="Clone"><svg viewBox="0 0 24 24"><path class="g" d="M6 4q6-5 12 0l5 8-2 2-4-4q1 12-5 13-6-1-5-13l-4 4-2-2z"/><circle cx="9.5" cy="11" r="2" fill="#eee"/><circle cx="14.5" cy="11" r="2" fill="#eee"/><path class="gs" d="M9 18q3 2 6 0"/></svg></button>
        <button class="tool" aria-label="Drawing"><svg viewBox="0 0 24 24"><path class="w" d="M9 6.500h14v14H9z"/><path class="g" d="M1 7h8V3l6 6-6 6v-4H1z"/><path class="gs" d="m13 18 7-7v7z"/></svg></button>
        <button class="tool" aria-label="Mirror"><svg viewBox="0 0 24 24"><path class="g" d="M9 5v14H1zM15 5v14h8z"/><path d="M12 1v22" stroke="#999" stroke-width="3" stroke-dasharray="3.5 2"/></svg></button>
        <button class="tool" aria-label="Stretch"><svg viewBox="0 0 24 24"><path d="M2.500 2.500h9v19h-9z" fill="#e5e5e2" stroke="#8e8e8c" stroke-width="2.5"/><path d="m13 4 8 17h-8" fill="none" stroke="#9a9a98" stroke-width="2.5" stroke-dasharray="4 1.5"/></svg></button>
      </div>

      <div class="workspace">
        <!-- Combo view -->
        <aside class="combo-view">
          <div class="panel-title">
            <h2>Combo View</h2>
            <button aria-label="Float"><svg width="11" height="11" viewBox="0 0 11 11"><path d="M.500.500h10v10H.500zM4.500 2.500h4v4h-4zM2.500 4.500h4v4h-4z" fill="none" stroke="#5b5c57"/></svg></button>
          </div>
          <div class="tabs">
            <button class="tab">Model</button>
            <button class="tab current">Tasks</button>
          </div>
          <div class="tab-pane">
            <button class="push close-task"><span><u>C</u>lose</span></button>
            <section class="task">
              <header class="task-head">
                <svg width="16" height="16" viewBox="0 0 16 16"><path d="M1 5h10v10H1z" fill="none" stroke="#4a3f3a" stroke-width="1.6"/><circle cx="10" cy="6" r="5" fill="none" stroke="#4a3f3a" stroke-width="1.6"/></svg>
                <h3>Select Plane</h3>
                <button aria-label="Collapse"><svg width="14" height="14" viewBox="0 0 14 14"><circle cx="7" cy="7" r="7" fill="#fff3ec"/><path d="m4 7 3-3 3 3M4 11l3-3 3 3" fill="none" stroke="#b5562e" stroke-width="1.3"/></svg></button>
              </header>
              <form class="task-body">
                <div class="field">
                  <label for="offset">Offset</label>
                  <div class="quantity"><input type="text" id="offset" value="0,00 mm"><svg><use href="#check"/></svg></div>
                </div>
                <div class="plane-buttons">
                  <button type="button" class="push"><svg viewBox="0 0 24 24"><use href="#box"/><path class="t" d="M1.500 7 7 1.500h15.500L17 7zM17 7l5.500-5.500v15L17 22z"/></svg>XY (top)</button>
                  <button type="button" class="push"><svg viewBox="0 0 24 24"><use href="#wire"/><path class="t" d="M1.500 6h16v16h-16z"/></svg>XZ (front)</button>
                  <button type="button" class="push"><svg viewBox="0 0 24 24"><use href="#box"/><path d="m17 7 5.500-5.500v15L17 22z" fill="#0fa3a5" stroke="#0a5f62"/></svg>YZ (side)</button>
                  <button type="button" class="push"><svg viewBox="0 0 24 24"><path class="t" d="m12 1 10.500 5v12L12 23 1.500 18V6z"/><path d="m12 11 10-5v12l-10 5z" fill="#0d9a9c"/></svg>View</button>
                  <button type="button" class="push"><svg><use href="#iso"/></svg>Auto</button>
                </div>
                <div class="field">
                  <label for="spacing">Grid spacing</label>
                  <div class="quantity"><input type="text" id="spacing" value="1,00 mm"><svg><use href="#check"/></svg></div>
                </div>
                <div class="field split">
                  <label for="mainline">Main line every</label>
                  <div class="spinbox"><input type="text" id="mainline" value="10"><svg><use href="#spin"/></svg></div>
                </div>
                <div class="check-row">
                  <input type="checkbox" id="center">
                  <label for="center">Center plane on view</label>
                </div>
              </form>
            </section>
          </div>
        </aside>
        <div class="splitter"><span class="grip"></span></div>

        <!-- 3D view and document tabs -->
        <section class="documents">
          <svg class="view3d" viewBox="448 160 1472 855" preserveAspectRatio="xMinYMin slice" role="img" aria-label="3D view">
            <defs>
              <linearGradient id="sky" x1="0" y1="0" x2="0" y2="1"><stop offset="0" stop-color="#333365"/><stop offset="1" stop-color="#9896a8"/></linearGradient>
            </defs>
            <path d="M448 160h1472v855H448z" fill="url(#sky)"/>
            <!-- back profile with the visible thickness -->
            <path class="thickness" d="M518 254C523 251 528 250 533 250C552 250 571 266 590 283C609 300 629 321 648 321C661 321 675 313 688 313C711 313 734 321 757 357C766 370 774 387 783 402C795 423 808 436 820 445C833 455 847 461 860 461C874 461 888 453 902 453C915 453 927 467 940 487C949 501 958 516 967 527C973 534 979 538 985 538C999 538 1013 526 1027 526C1042 526 1058 545 1073 561C1090 579 1106 591 1123 598C1139 604 1154 607 1170 612C1182 616 1195 621 1207 632C1220 644 1234 660 1247 672C1258 682 1269 691 1280 698C1288 703 1296 704 1304 704L1316 703V852L1312 853L518 395z"/>
            <!-- front face -->
            <path class="face" transform="translate(-4 2)" d="M522 253C526 250 529 250 533 250C552 250 571 266 590 283C609 300 629 321 648 321C661 321 675 313 688 313C711 313 734 321 757 357C766 370 774 387 783 402C795 423 808 436 820 445C833 455 847 461 860 461C874 461 888 453 902 453C915 453 927 467 940 487C949 501 958 516 967 527C973 534 979 538 985 538C999 538 1013 526 1027 526C1042 526 1058 545 1073 561C1090 579 1106 591 1123 598C1139 604 1154 607 1170 612C1182 616 1195 621 1207 632C1220 644 1234 660 1247 672C1258 682 1269 691 1280 698C1288 703 1296 704 1304 704L1316 703V851L1210 791L1209 794L1087 723V719L981 659L980 662L859 592V588L753 527L751 529L630 459V455L522 393z"/>
            <path d="m934 638 16 9" stroke="#38385c" stroke-width="4"/>
            <!-- axis cross -->
            <g fill="none" stroke-width="1.5">
              <path d="M1877.500 972V944" stroke="#22227c"/><path d="m1877.500 944 2.500 12h-5z" fill="#22227c" stroke="#22227c" stroke-width="1"/>
              <path d="m1878 972 17-9" stroke="#22802a"/><path d="m1896 962-9 2 3 5z" fill="#22802a" stroke="#22802a" stroke-width="1"/>
              <path d="m1878 973 24 14" stroke="#7c2222"/><path d="m1902 987-11-3 3-5z" fill="#7c2222" stroke="#7c2222" stroke-width="1"/>
            </g>
            <text class="axis" x="1879" y="945">Z</text>
            <text class="axis" x="1897" y="964">Y</text>
            <text class="axis" x="1904" y="988">X</text>
          </svg>
          <div class="doc-tabs">
            <div class="doc-tab"><svg width="16" height="16"><use href="#freecad"/></svg><span>Start page</span><button aria-label="Close Start page"><svg width="12" height="12"><use href="#cross"/></svg></button></div>
            <div class="doc-tab current"><svg width="16" height="16"><use href="#freecad"/></svg><span>4 - gcode + graphic : 1*</span><button aria-label="Close document"><svg width="12" height="12"><use href="#cross"/></svg></button></div>
          </div>
        </section>
      </div>

      <footer class="statusbar">
        <span>Pick a face to define the drawing plane</span>
        <button class="nav-style"><svg width="10" height="14" viewBox="0 0 10 14"><rect x="1" y="1" width="8" height="12" rx="3.5" fill="none" stroke="#333" stroke-width="1.7"/><path d="M5 3v4" stroke="#333" stroke-width="1.7"/></svg>Blender<svg class="caret" width="8" height="6"><use href="#down"/></svg></button>
        <span>6150,66 mm x 3572,57 mm</span>
      </footer>
    </main>
  </div>

  <svg class="pointer" width="14" height="22" viewBox="0 0 14 22"><path d="M1 1v17l4-4 3 6 3-1-3-6h5z" fill="#fff" stroke="#111" stroke-width="1.3"/></svg>
</body>
</html>
```
FILE: styles.css
```css
/* ----- GENERAL ----- */
* {
  box-sizing: border-box;
}

body {
  margin: 0;
  height: 100vh;
  display: flex;
  flex-direction: column;
  overflow: hidden;
  font-family: "Open Sans", "Noto Sans", sans-serif;
  font-size: 14px;
  line-height: 20px;
  color: #4c4c4c;
  background: #f0f1ec;
}

button, input, select {
  font: inherit;
  color: inherit;
  border: none;
  background: none;
  padding: 0;
  margin: 0;
}

h1, h2, h3 {
  margin: 0;
  font-size: 14px;
  font-weight: normal;
}

svg {
  display: block;
  flex: none;
}

u {
  text-underline-offset: 3px;
  text-decoration-thickness: 1px;
}

.sprite {
  position: absolute;
  width: 0;
  height: 0;
}

/* ----- ICON COLOURS ----- */
.t { fill: #1acaca; stroke: #0a5f62; }
.g { fill: #a9a9a7; stroke: #868684; }
.w { fill: #d9d9d6; stroke: #8e8e8c; }
.gs { fill: none; stroke: #868684; }
.paper { fill: #ecece9; stroke: #b0b0ae; }
.lines { fill: none; stroke: #b4b4b2; }
.dark { fill: none; stroke: #0a5558; stroke-width: 2; }
.core { fill: none; stroke: #24b5b5; stroke-width: .6; }
.pipe { fill: none; stroke: #929290; stroke-width: 3.4; }
.pipe-in { fill: none; stroke: #e9e9e6; stroke-width: 1.4; }

.dim {
  font-size: 8px;
  font-weight: bold;
  fill: #0a4c4e;
}

.dim.gray {
  fill: #8e8e8c;
}

.letter {
  font-family: "Liberation Serif", serif;
  font-size: 27px;
  font-weight: bold;
  font-style: italic;
  fill: #b4b4b2;
  stroke: #858583;
  stroke-width: .7;
}

.letter.script {
  fill: #dededb;
}

/* ----- SYSTEM BAR ----- */
.topbar {
  flex: none;
  height: 27px;
  display: grid;
  grid-template-columns: 1fr auto 1fr;
  align-items: center;
  background: linear-gradient(#57564b, #403f39);
  color: #dcdad4;
  font-size: 15px;
  font-weight: 600;
}

.topbar-left, .topbar-right, .top-item {
  display: flex;
  align-items: center;
}

.topbar-left {
  padding-left: 12px;
  gap: 20px;
}

.topbar-right {
  justify-content: flex-end;
  padding-right: 15px;
}

.top-item {
  gap: 6px;
  line-height: 20px;
}

.clock {
  margin-left: 60px;
}

.caret {
  fill: currentColor;
}

.tray-rec { margin-right: 25px; }
.tray-clip { margin-right: 26px; }
.tray-help { margin: 0 16px 0 36px; }
.tray-battery { margin: 0 12px 0 14px; }
.lang { gap: 9px; }

/* ----- DOCK ----- */
.desktop {
  flex: 1;
  min-height: 0;
  display: flex;
}

.dock {
  flex: none;
  width: 49px;
  display: flex;
  flex-direction: column;
  background: #5d5e56;
}

.dock-item {
  height: 46px;
  display: flex;
  align-items: center;
  padding-left: 4px;
}

.dock-item::before {
  content: "";
  width: 4px;
  height: 4px;
  margin: 0 2px 0 -2px;
  border-radius: 50%;
}

.dock-item.running::before {
  background: #dd5a2b;
}

.dock-item.two::before {
  box-shadow: 0 -6px #dd5a2b;
}

.dock-item svg {
  width: 28px;
  height: 28px;
  margin-left: 2px;
}

.dock-item.active {
  margin: 4px 3px;
  height: 38px;
  padding-left: 1px;
  border-radius: 4px;
  background: #76776f;
}

.dock-item.apps {
  margin-top: auto;
}

/* ----- WINDOW ----- */
.window {
  flex: 1;
  min-width: 0;
  display: flex;
  flex-direction: column;
}

.titlebar {
  flex: none;
  height: 28px;
  display: grid;
  grid-template-columns: 1fr auto 1fr;
  align-items: center;
  background: linear-gradient(#3c3b36, #4a4941);
  color: #dfdbd2;
}

.titlebar h1 {
  grid-column: 2;
  font-size: 15px;
  font-weight: 600;
}

.window-buttons {
  display: flex;
  justify-content: flex-end;
  gap: 4px;
  padding-right: 5px;
}

.window-buttons button {
  width: 16px;
  height: 16px;
  border-radius: 50%;
  background: #7c7b74;
}

.window-buttons .close {
  background: #f0642f;
}

.window-buttons path {
  fill: none;
  stroke: #34332e;
  stroke-width: 1.2;
}

.menubar {
  flex: none;
  height: 25px;
  display: flex;
  align-items: center;
  gap: 20px;
  padding-left: 14px;
  background: #3c3b36;
  color: #dfdbd2;
}

/* ----- TOOLBARS ----- */
.toolbar {
  flex: none;
  height: 40px;
  display: flex;
  align-items: center;
}

.tool {
  flex: none;
  width: 34px;
  height: 34px;
  margin: 0 1px;
  display: flex;
  align-items: center;
  justify-content: center;
  border: 1px solid transparent;
  border-radius: 4px;
}

.tool svg {
  width: 24px;
  height: 24px;
  overflow: visible;
}

.tool.on {
  border-color: #acaca8;
  background: linear-gradient(#e3e3df, #f6f6f3);
}

.drop {
  width: 20px;
  display: flex;
  justify-content: center;
  fill: #6c6c69;
}

.drop.off {
  fill: #b4b4b1;
}

.sep {
  flex: none;
  width: 1px;
  height: 24px;
  margin: 0 5px;
  background: #d2d2ce;
}

.grip {
  flex: none;
  width: 4px;
  height: 8px;
  margin: 0 4px 0 5px;
  background: repeating-linear-gradient(#c3c3bf 0 1px, transparent 1px 3px);
}

.toolbar .grip:first-child {
  margin-right: 2px;
}

.combo {
  width: 190px;
  height: 24px;
  display: flex;
  align-items: center;
  padding: 0 1px 0 5px;
  border: 1px solid #b4b4b0;
  border-radius: 4px;
  background: linear-gradient(#fff, #f0f0ed);
}

.combo svg {
  width: 16px;
  height: 18px;
}

.combo select {
  flex: 1;
  appearance: none;
  padding-left: 4px;
}

.properties {
  display: flex;
  align-items: center;
  gap: 2px;
}

.push {
  height: 24px;
  display: flex;
  align-items: center;
  justify-content: center;
  gap: 3px;
  border: 1px solid #b4b4b0;
  border-radius: 4px;
  background: linear-gradient(#fff, #f1f1ee);
}

.push svg {
  width: 16px;
  height: 16px;
}

.push.wide {
  width: 83px;
}

.push.small {
  width: 20px;
}

.swatch {
  width: 16px;
  height: 16px;
}

.line-color { background: #000; }
.face-color { background: #ccc; }

.spinbox {
  height: 24px;
  display: flex;
  border: 1px solid #b4b4b0;
  border-radius: 4px;
  background: linear-gradient(#fff, #f1f1ee);
}

.spinbox input {
  flex: 1;
  min-width: 0;
  padding-left: 5px;
  border-right: 1px solid #c3c3bf;
  border-radius: 3px 0 0 3px;
  background: #fff;
}

.spinbox svg {
  width: 15px;
  height: 22px;
}

.line-width { width: 50px; }
.text-size { width: 73px; }

/* ----- COMBO VIEW ----- */
.workspace {
  flex: 1;
  min-height: 0;
  display: flex;
}

.combo-view {
  flex: none;
  width: 392px;
  display: flex;
  flex-direction: column;
}

.panel-title {
  height: 25px;
  display: flex;
  align-items: center;
  justify-content: space-between;
  padding: 0 2px;
}

.tabs {
  height: 29px;
  display: flex;
  align-items: flex-end;
  padding-left: 1px;
}

.tab {
  height: 27px;
  padding: 0 8px;
  border: 1px solid #b4b4b0;
  border-bottom: none;
  border-radius: 3px 3px 0 0;
  background: linear-gradient(#ededea, #dededa);
}

.tab.current {
  height: 31px;
  margin-bottom: -1px;
  border-left: none;
  background: linear-gradient(#fbfbfa, #f0f1ec);
}

.tab-pane {
  flex: 1;
  margin: 0 0 1px 1px;
  padding: 21px 9px;
  border: 1px solid #acaca8;
  border-radius: 0 3px 0 0;
  box-shadow: inset 0 0 0 1px #f0f1ec;
  background: #c7c8c3;
}

.close-task {
  width: 82px;
  margin: 0 auto 19px;
}

.task-head {
  height: 24px;
  display: flex;
  align-items: center;
  gap: 4px;
  padding: 0 4px 0 7px;
  border: 1px solid #f8efe9;
  border-radius: 4px 4px 0 0;
  background: linear-gradient(90deg, #f07a48, #fcc6ac);
  color: #fff;
}

.task-head h3 {
  flex: 1;
  font-weight: bold;
}

.task-body {
  height: 360px;
  display: flex;
  flex-direction: column;
  gap: 8px;
  padding: 14px 15px 0 14px;
  background: #f1f2ed;
}

.field {
  display: flex;
  align-items: center;
  gap: 9px;
}

.quantity {
  flex: 1;
  height: 31px;
  display: flex;
  align-items: center;
  padding-right: 2px;
  border: 1px solid #acaca8;
  border-radius: 4px;
  background: #fff;
}

.quantity input {
  flex: 1;
  min-width: 0;
  padding-left: 3px;
}

.quantity svg {
  width: 22px;
  height: 22px;
}

.plane-buttons {
  display: flex;
  flex-direction: column;
  gap: 8px;
  padding-left: 1px;
}

.plane-buttons .push {
  width: 90px;
  gap: 2px;
}

.split {
  justify-content: space-between;
}

.split .spinbox {
  width: 166px;
}

.check-row {
  display: flex;
  align-items: center;
  gap: 8px;
  padding: 0 3px;
}

.check-row input {
  appearance: none;
  width: 14px;
  height: 14px;
  border: 1px solid #a2a29e;
  border-radius: 2px;
  background: #fff;
}

.splitter {
  flex: none;
  width: 7px;
  display: flex;
  align-items: center;
}

.splitter .grip {
  margin: 0 2px;
}

/* ----- 3D VIEW ----- */
.documents {
  flex: 1;
  min-width: 0;
  display: flex;
  flex-direction: column;
}

.view3d {
  flex: 1;
  min-height: 0;
  width: 100%;
}

.thickness, .face {
  stroke: #1a1a1a;
  stroke-width: 2;
  stroke-linejoin: round;
}

.thickness { fill: #b4b4af; }
.face { fill: #81817d; }

.axis {
  font-family: "Liberation Sans", sans-serif;
  font-size: 10px;
  fill: #000;
}

.doc-tabs {
  flex: none;
  height: 33px;
  display: flex;
  align-items: flex-start;
  border-top: 1px solid #b4b4b0;
}

.doc-tab {
  height: 29px;
  display: flex;
  align-items: center;
  gap: 9px;
  padding: 0 11px 0 6px;
  border: 1px solid #b4b4b0;
  border-top: none;
  border-radius: 0 0 4px 4px;
  background: linear-gradient(#dededa, #f0f0ed);
}

.doc-tab.current {
  height: 32px;
  border-left: none;
  background: #f8f8f6;
}

.doc-tab button {
  margin-left: 4px;
}

/* ----- STATUS BAR ----- */
.statusbar {
  flex: none;
  height: 32px;
  display: flex;
  align-items: center;
  padding: 0 2px;
  border-top: 1px solid #d2d2ce;
}

.nav-style {
  display: flex;
  align-items: center;
  gap: 7px;
  margin: 0 14px 0 auto;
}

/* ----- POINTER ----- */
.pointer {
  position: absolute;
  left: 164px;
  top: 439px;
}
```
